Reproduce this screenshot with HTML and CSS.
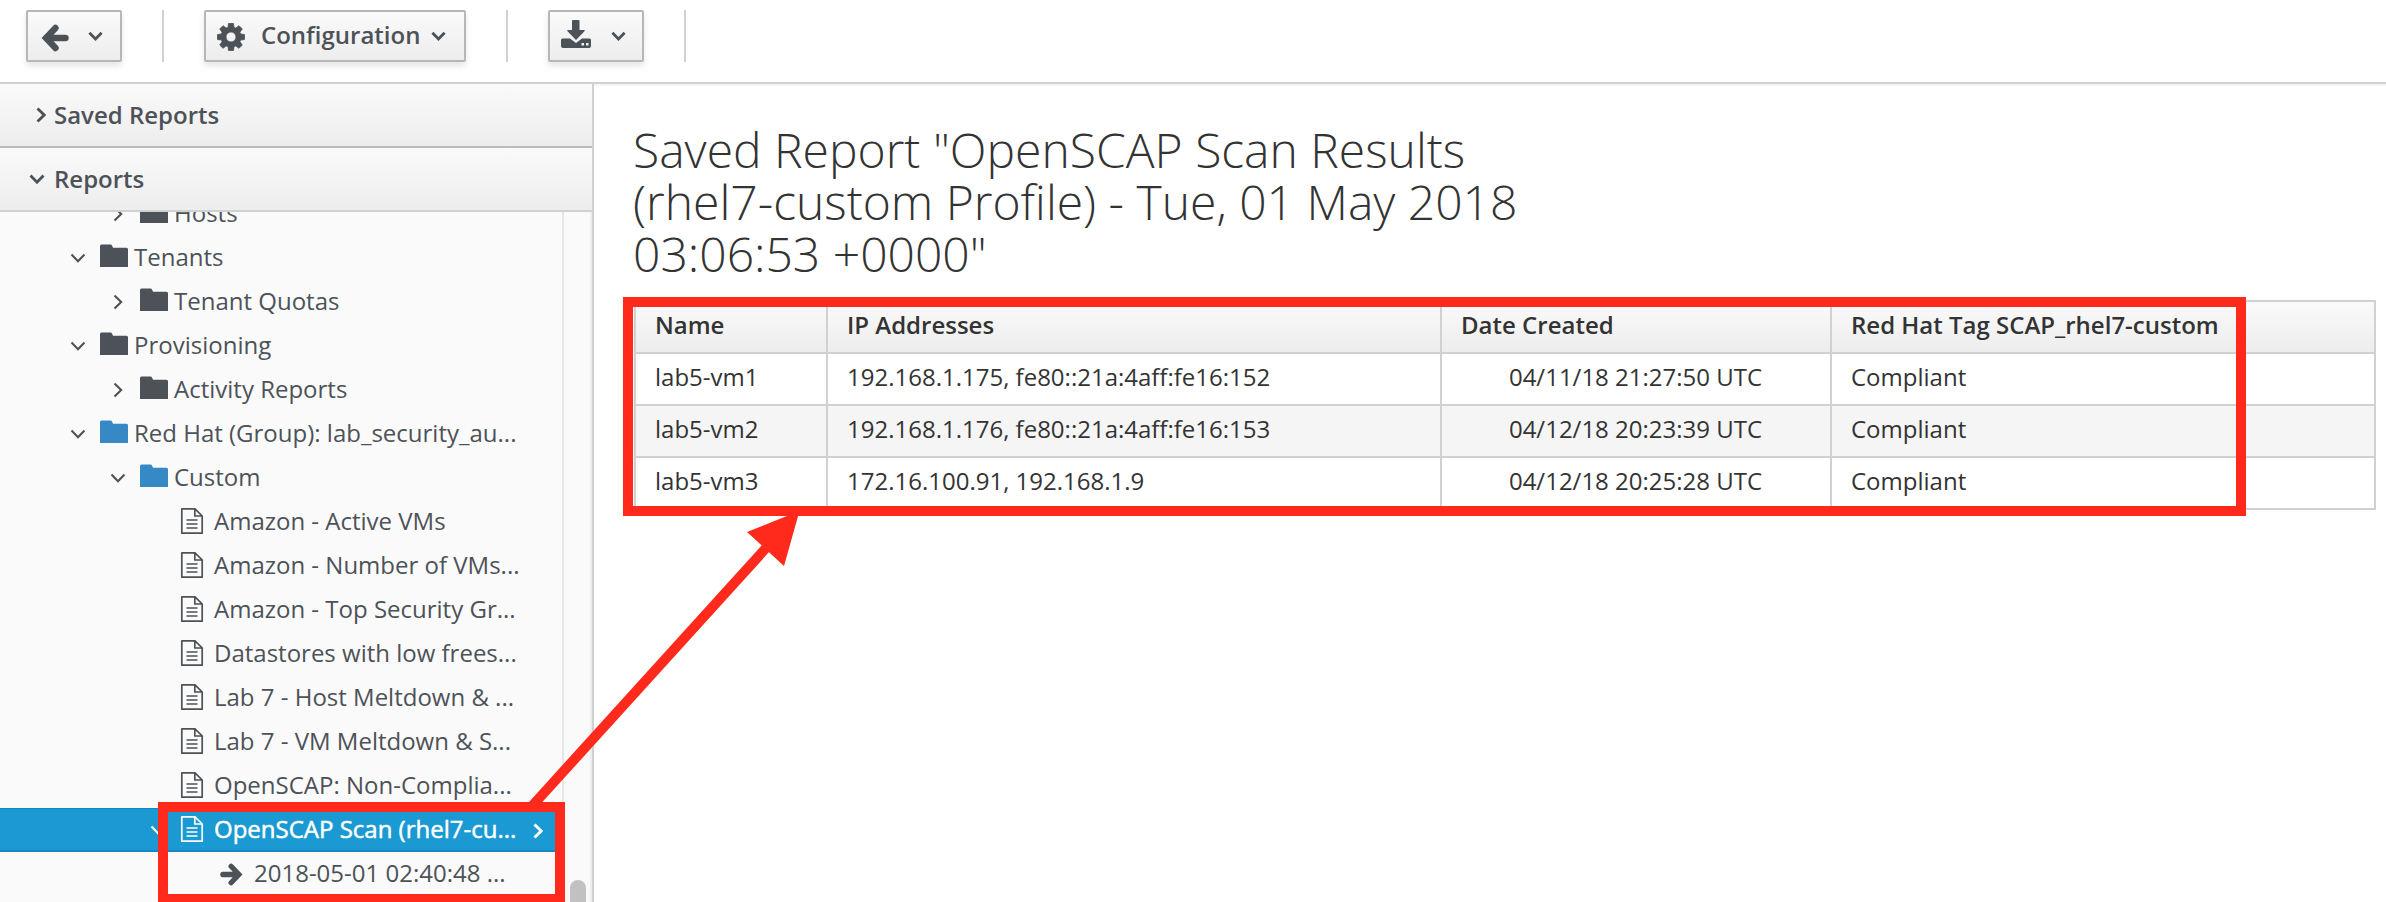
FILE: index.html
```
<!DOCTYPE html>
<html lang="en">
<head>
<meta charset="utf-8">
<title>Reports</title>
<link rel="stylesheet" href="styles.css">
</head>
<body>
<svg class="defs" width="0" height="0">
  <symbol id="down" viewBox="0 0 16 10"><path d="M1.500 1.500 8 8.200 14.500 1.500" fill="none" stroke="currentColor"/></symbol>
  <symbol id="right" viewBox="0 0 10 16"><path d="M1.500 1.500 8.200 8 1.500 14.500" fill="none" stroke="currentColor"/></symbol>
  <symbol id="folder" viewBox="0 0 28 23"><path d="M0 23V2Q0 .5 1.500 .5H10.500Q11.500 .5 12 1.500L13 3.800H26.500Q28 3.800 28 5.300V23Z" fill="currentColor"/></symbol>
  <symbol id="doc" viewBox="0 0 24 28"><path d="M1.800 1.800H15L22.200 9V26.200H1.800ZM14.800 2V9H22M6.500 13H17.500M6.500 17H17.500M6.500 21H17.500" fill="none" stroke="currentColor" stroke-width="1.700" stroke-linejoin="round"/></symbol>
  <symbol id="arrow" viewBox="0 0 28 28"><path d="M24.500 14H6M14.500 4 5 14 14.500 24" fill="none" stroke="currentColor" stroke-width="6.400" stroke-linecap="round"/></symbol>
</svg>
<header class="toolbar">
  <button class="btn"><svg class="ic-arrow"><use href="#arrow"/></svg><svg class="caret"><use href="#down"/></svg></button>
  <i class="sep"></i>
  <button class="btn btn-config">
    <svg class="ic-gear" viewBox="-14 -14 28 28"><path fill="currentColor" stroke="currentColor" stroke-width=".8" stroke-linejoin="round" fill-rule="evenodd" d="M-2.500-13.500H2.500L3-9.600 4.800-8.900 8-11.300 11.300-8 8.900-4.800 9.600-3 13.500-2.500V2.500L9.600 3 8.900 4.800 11.300 8 8 11.300 4.800 8.900 3 9.600 2.500 13.500H-2.500L-3 9.600-4.800 8.900-8 11.300-11.300 8-8.900 4.800-9.600 3-13.500 2.500V-2.500L-9.600-3-8.900-4.800-11.300-8-8-11.300-4.800-8.900-3-9.600ZM0-5A5 5 0 1 0 0 5 5 5 0 1 0 0-5Z"/></svg>
    <span>Configuration</span><svg class="caret"><use href="#down"/></svg></button>
  <i class="sep"></i>
  <button class="btn btn-dl">
    <svg class="ic-dl" viewBox="0 0 30 28"><path fill="currentColor" fill-rule="evenodd" d="M12 0H17.500Q18.500 0 18.500 1V10H23Q24.500 10 23.500 11.200L15 20 6.500 11.200Q5.500 10 7 10H11V1Q11 0 12 0ZM1.500 18.500H9L15 23 21 18.500H28.500Q30 18.500 30 20V26Q30 28 28 28H2Q0 28 0 26V20Q0 18.500 1.500 18.500ZM20.500 23V25.500H23V23ZM25 23V25.500H27.500V23Z"/></svg>
    <svg class="caret"><use href="#down"/></svg></button>
  <i class="sep"></i>
</header>
<div class="body">
  <aside class="side">
    <h4 class="panel"><svg class="c-right"><use href="#right"/></svg>Saved Reports</h4>
    <h4 class="panel panel-open"><svg class="c-down"><use href="#down"/></svg>Reports</h4>
    <div class="tree-wrap">
      <ul class="tree">
        <li class="l2"><b class="tg"><svg class="c-right"><use href="#right"/></svg></b><svg class="folder"><use href="#folder"/></svg>Hosts</li>
        <li class="l1"><b class="tg"><svg class="c-down"><use href="#down"/></svg></b><svg class="folder"><use href="#folder"/></svg>Tenants</li>
        <li class="l2"><b class="tg"><svg class="c-right"><use href="#right"/></svg></b><svg class="folder"><use href="#folder"/></svg>Tenant Quotas</li>
        <li class="l1"><b class="tg"><svg class="c-down"><use href="#down"/></svg></b><svg class="folder"><use href="#folder"/></svg>Provisioning</li>
        <li class="l2"><b class="tg"><svg class="c-right"><use href="#right"/></svg></b><svg class="folder"><use href="#folder"/></svg>Activity Reports</li>
        <li class="l1"><b class="tg"><svg class="c-down"><use href="#down"/></svg></b><svg class="folder blue"><use href="#folder"/></svg>Red Hat (Group): lab_security_au...</li>
        <li class="l2"><b class="tg"><svg class="c-down"><use href="#down"/></svg></b><svg class="folder blue"><use href="#folder"/></svg>Custom</li>
        <li class="l3"><b class="tg"></b><svg class="doc"><use href="#doc"/></svg>Amazon - Active VMs</li>
        <li class="l3"><b class="tg"></b><svg class="doc"><use href="#doc"/></svg>Amazon - Number of VMs...</li>
        <li class="l3"><b class="tg"></b><svg class="doc"><use href="#doc"/></svg>Amazon - Top Security Gr...</li>
        <li class="l3"><b class="tg"></b><svg class="doc"><use href="#doc"/></svg>Datastores with low frees...</li>
        <li class="l3"><b class="tg"></b><svg class="doc"><use href="#doc"/></svg>Lab 7 - Host Meltdown &amp; ...</li>
        <li class="l3"><b class="tg"></b><svg class="doc"><use href="#doc"/></svg>Lab 7 - VM Meltdown &amp; S...</li>
        <li class="l3"><b class="tg"></b><svg class="doc"><use href="#doc"/></svg>OpenSCAP: Non-Complia...</li>
        <li class="l3 sel"><b class="tg"><svg class="c-down"><use href="#down"/></svg></b><svg class="doc"><use href="#doc"/></svg>OpenSCAP Scan (rhel7-cu...<svg class="c-go"><use href="#right"/></svg></li>
        <li class="l4"><b class="tg"></b><svg class="go"><use href="#arrow"/></svg>2018-05-01 02:40:48 ...</li>
      </ul>
      <div class="scroll"><i class="thumb"></i></div>
    </div>
  </aside>
  <main class="main">
    <h1>Saved Report "OpenSCAP Scan Results<br>(rhel7-custom Profile) - Tue, 01 May 2018<br>03:06:53 +0000"</h1>
    <table>
      <colgroup><col class="k1"><col class="k2"><col class="k3"><col></colgroup>
      <thead><tr><th>Name</th><th>IP Addresses</th><th>Date Created</th><th>Red Hat Tag SCAP_rhel7-custom</th></tr></thead>
      <tbody>
        <tr><td>lab5-vm1</td><td>192.168.1.175, fe80::21a:4aff:fe16:152</td><td class="mid">04/11/18 21:27:50 UTC</td><td>Compliant</td></tr>
        <tr><td>lab5-vm2</td><td>192.168.1.176, fe80::21a:4aff:fe16:153</td><td class="mid">04/12/18 20:23:39 UTC</td><td>Compliant</td></tr>
        <tr><td>lab5-vm3</td><td>172.16.100.91, 192.168.1.9</td><td class="mid">04/12/18 20:25:28 UTC</td><td>Compliant</td></tr>
      </tbody>
    </table>
  </main>
</div>
<svg class="marks" viewBox="0 0 2386 902">
  <rect x="163" y="807" width="397" height="92"/>
  <rect x="628" y="302" width="1613" height="209"/>
  <path class="shaft" d="M533 805 766 548"/>
  <path class="head" d="M799.500 511 747 532 784 566Z"/>
</svg>
</body>
</html>
```
FILE: styles.css
```
* { box-sizing: border-box; }
body { margin: 0; width: 2386px; height: 902px; overflow: hidden; position: relative; background: #fff; color: #333; font: 24px/40px "Open Sans", sans-serif; }
svg { display: block; flex: none; }
.defs { position: absolute; }
.toolbar { display: flex; height: 84px; padding: 10px 0 0 26px; border-bottom: 2px solid #d1d1d1; color: #4d5258; }
.btn { display: flex; align-items: center; width: 96px; height: 52px; padding: 0 0 0 13px; border: 2px solid #b7b7b7; border-radius: 2px; background: linear-gradient(#fafafa, #ededed); box-shadow: 0 4px 6px rgba(3,3,3,.1); color: #4d5258; font: 600 24px/48px "Open Sans", sans-serif; }
.btn-config { width: 262px; padding-left: 11px; }
.btn-config span { margin: -3px 0 0 16px; }
.btn-dl { padding-left: 11px; }
.sep { width: 2px; height: 52px; margin: 0 40px; background: #d1d1d1; }
.ic-arrow { width: 28px; height: 28px; margin-top: 3px; }
.ic-gear { width: 28px; height: 28px; margin-top: 1px; }
.ic-dl { width: 30px; height: 28px; margin-top: -4px; }
.caret { width: 15px; height: 10px; margin: -1px 0 0 19px; stroke-width: 3; }
.btn-config .caret { margin-left: 11px; }
.btn-dl .caret { margin-left: 20px; }
.body { display: flex; height: 818px; }
.side { display: flex; flex-direction: column; width: 594px; border-right: 2px solid #d1d1d1; background: #fafafa; color: #4d5258; }
.panel { display: flex; align-items: center; height: 64px; margin: 0; padding: 0 0 0 36px; border-bottom: 2px solid #bbb; background: linear-gradient(#fafafa, #ededed); font-weight: 600; font-size: 24px; }
.panel-open { padding-left: 29px; border-color: #d1d1d1; }
.c-right { width: 10px; height: 16px; margin-right: 8px; stroke-width: 2.800; }
.c-down { width: 16px; height: 10px; margin-right: 9px; stroke-width: 2.800; }
.tree-wrap { display: flex; flex: 1; min-height: 0; overflow: hidden; }
.tree { width: 562px; margin: -20px 0 0; padding: 0; list-style: none; }
.tree li { display: flex; align-items: center; height: 44px; padding-bottom: 2px; line-height: 38px; white-space: nowrap; }
.tg { display: flex; justify-content: center; width: 44px; }
.tg svg { margin: 1px 0 0; stroke-width: 2.100; }
.l1 { padding-left: 56px; }
.l2 { padding-left: 96px; }
.l3 { padding-left: 136px; }
.l4 { padding-left: 176px; }
.folder { width: 28px; height: 23px; margin: -4px 6px 0 0; }
.blue { color: #3689c4; }
.doc { width: 24px; height: 28px; margin: 0 10px 0 0; }
.go { width: 23px; height: 23px; margin: 2px 11px 0 0; transform: scaleX(-1); }
.tree .sel { padding-bottom: 1px; background: #1a99d3; border-top: 1px solid #1587c9; border-bottom: 2px solid #1587c9; color: #fff; -webkit-text-stroke: .5px #fff; }
.c-go { width: 10px; height: 16px; margin: 4px 0 0 17px; stroke-width: 3; }
.scroll { flex: 1; border-left: 2px solid #e6e6e6; border-right: 2px solid #ededed; padding: 668px 0 0 6px; }
.thumb { display: block; width: 16px; height: 40px; border-radius: 8px; background: #c1c1c1; }
.main { flex: 1; padding: 38px 10px 0 40px; border-top: 2px solid #f5f5f5; }
h1 { margin: 0 0 20px -1px; font-weight: 300; font-size: 48px; line-height: 52px; }
table { width: 1742px; border-collapse: collapse; table-layout: fixed; }
th, td { height: 52px; padding: 2px 20px 6px 19px; border: 2px solid #d1d1d1; text-align: left; line-height: 40px; white-space: nowrap; }
th { font-weight: 600; background: linear-gradient(#fafafa, #ededed); }
.k1 { width: 192px; }
.k2 { width: 614px; }
.k3 { width: 390px; }
.mid { text-align: center; }
tbody tr:nth-child(2) { background: #f5f5f5; }
.marks { position: absolute; left: 0; top: 0; width: 2386px; height: 902px; pointer-events: none; }
.marks rect { fill: none; stroke: #ff2a1c; stroke-width: 10; }
.shaft { stroke: #ff2a1c; stroke-width: 10; }
.head { fill: #ff2a1c; }
```
